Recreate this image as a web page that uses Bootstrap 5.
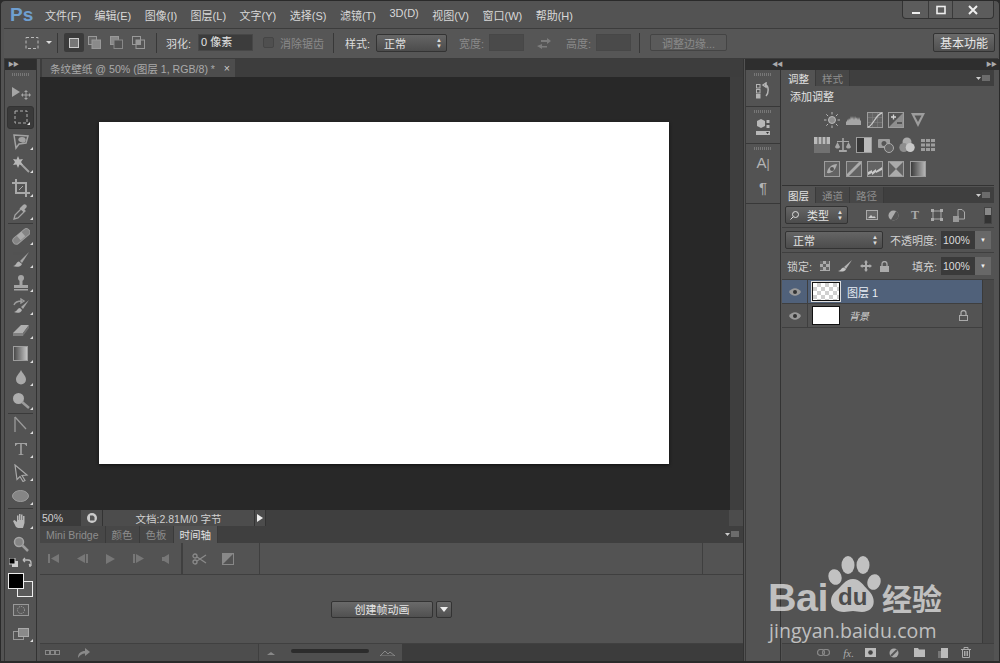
<!DOCTYPE html>
<html lang="zh">
<head>
<meta charset="UTF-8">
<title>Photoshop</title>
<link href="https://cdn.jsdelivr.net/npm/bootstrap@5.3.3/dist/css/bootstrap.min.css" rel="stylesheet">
<style>
  html, body { margin: 0; height: 663px; overflow: hidden; background: #2b2b2b; }
  body { font: 11px "Liberation Sans", "Noto Sans CJK SC", sans-serif; color: #d0d0d0; }
  svg { display: block; flex: none; }
  .win { width: 1000px; height: 663px; background: #535353; position: relative; overflow: hidden; border: 1px solid #2a2a2a; border-bottom-width: 2px; border-radius: 5px 5px 0 0; }

  .menubar { height: 27px; padding-left: 9px; }
  .logo { width: 35px; font: bold 19px "Liberation Sans", sans-serif; color: #6f9fd0; }
  .menu { gap: 13.5px; color: #d8d8d8; }
  .winbtns { align-self: flex-start; height: 18px; margin-right: 5px; border: 1px solid #333; border-top: 0; border-radius: 0 0 4px 4px; background: #5c5c5c; }
  .winbtns > div { height: 17px; display: flex; align-items: center; justify-content: center; border-left: 1px solid #3a3a3a; }
  .winbtns > div:first-child { border-left: 0; width: 25px; }
  .winbtns > div:nth-child(2) { width: 24px; }
  .winbtns > div:last-child { width: 41px; }

  /* 选项栏 */
  .optbar { height: 31px; margin: 0 1px 0 3px; padding: 0 0 2px 6px; border-top: 1px solid #3c3c3c; border-bottom: 1px solid #3c3c3c; background: #565656; color: #dcdcdc; }
  .optbar > * { flex: none; }
  .optbar .marquee { margin-left: 15px; }
  .optbar .caret { margin-left: 7px; }
  .optbar .sep1 { margin-left: 5px; }
  .optbar .mode-on { width: 20px; height: 19px; margin-left: 6px; background: #3b3b3b; border-radius: 2px; }
  .optbar .mode2 { margin-left: 4px; }
  .optbar .mode3 { margin-left: 9px; }
  .optbar .sep2 { margin-left: 11px; }
  .optbar .lbl-feather { margin-left: 9px; width: 32px; }
  .optbar .in-feather { width: 55px; }
  .optbar .chk { width: 11px; height: 11px; margin-left: 10px; background: #4f4f4f; border: 1px solid #454545; border-radius: 2px; }
  .optbar .lbl-aa { margin-left: 6px; width: 53px; }
  .optbar .lbl-style { margin-left: 11px; width: 31px; }
  .optbar .sel-style { width: 71px; }
  .optbar .lbl-w { margin-left: 12px; width: 30px; }
  .optbar .in-size { width: 35px; background: #4a4a4a; }
  .optbar .swap { margin-left: 13px; }
  .optbar .lbl-h { margin-left: 15px; width: 30px; }
  .optbar .sep3 { margin-left: 8px; }
  .optbar .refine { margin-left: 10px; width: 77px; height: 17px; background: #5a5a5a; border: 1px solid #444; border-radius: 2px; }
  .optbar .workspace { width: 62px; height: 19px; font-size: 12px; margin-right: 3px; }
  .vsep { width: 1px; height: 20px; background: #383838; }
  .dim { color: #8a8a8a; }
  .field { height: 17px; background: #3c3c3c; border: 1px solid #474747; color: #e4e4e4; padding-left: 2px; line-height: 15px; }
  .selbox { height: 18px; background: linear-gradient(#656565, #4c4c4c); border: 1px solid #333; border-radius: 2px; display: flex; align-items: center; justify-content: space-between; padding: 0 4px 0 7px; color: #e4e4e4; }
  .updown { font-size: 6px; line-height: 6px; color: #ddd; width: 6px; text-align: center; }
  .btn-ps { background: linear-gradient(#6a6a6a, #505050); border: 1px solid #333; border-radius: 2px; color: #e6e6e6; display: flex; align-items: center; justify-content: center; }

  .main { height: 602px; }
  .strip { height: 11px; background: #2e2e2e; color: #aaa; font-size: 6px; line-height: 11px; padding: 0 3px; letter-spacing: -1px; display: flex; justify-content: space-between; }
  .strip-r { margin-left: 1px; }
  .strip-r span:first-child { margin-left: 24px; }
  .grip { height: 3px; margin: 3px auto 0; width: 18px; background: repeating-linear-gradient(90deg, #777 0 1px, transparent 1px 2px); }

  /* 工具栏 */
  .toolbar { width: 33px; margin-left: 3px; margin-right: 3px; border-left: 1px solid #383838; border-right: 1px solid #333; }
  .tools { padding-top: 6px; }
  .tools svg { opacity: .85; }
  .tool { height: 23.55px; position: relative; display: flex; align-items: center; justify-content: center; }
  .tool.more::after { content: ""; position: absolute; right: 3px; bottom: 3px; border-style: solid; border-width: 0 0 3px 3px; border-color: transparent transparent #ddd transparent; }
  .tool.on { background: #3a3a3a; border-radius: 3px; margin: 0 2px; border: 1px solid #333; }
  .hsep { height: 1px; margin: 0 3px; background: #3a3a3a; }
  .swapper { height: 13px; }
  .swatches { padding: 4px 0 0 3px; }
  .fg { width: 16px; height: 16px; background: #000; border: 1px solid #eee; position: relative; z-index: 1; }
  .bg { width: 16px; height: 16px; background: #5a5a5a; border: 1px solid #eee; margin: -8px 0 0 9px; }
  .qmask { margin-top: 7px; }
  .screen { margin-top: 6px; }

  /* 文档区 */
  .center { width: 704px; border-right: 1px solid #333; }
  .doctabs { height: 18px; background: #3d3d3d; }
  .doctab { width: 193px; margin-left: 2px; height: 18px; background: #4d4d4d; color: #aaa; padding: 0 5px 0 8px; font-size: 10.6px; white-space: nowrap; }
  .doctab b { font-weight: normal; color: #ccc; }
  .canvas-wrap { height: 433px; }
  .canvas { background: #282828; flex: 1; padding: 45px 61px 46px 59px; }
  .paper { background: #fff; height: 100%; box-shadow: 0 1px 3px #111; }
  .vscroll { width: 13px; background: #3e3e3e; }
  .status { height: 16px; background: #3f3f3f; font-size: 10.5px; }
  .seg { height: 16px; background: #4c4c4c; border-right: 1px solid #333; display: flex; align-items: center; justify-content: center; }
  .seg-zoom { width: 41px; justify-content: flex-start; padding-left: 2px; background: #3a3a3a; border: 0; }
  .seg-prof { width: 22px; }
  .seg-doc { width: 152px; }
  .seg-arrow { width: 11px; }
  .seg-corner { width: 14px; border: 0; }
  .ptabs { height: 17px; background: #3f3f3f; }
  .ptabs-sm { height: 16px; }
  .ptab { padding: 0 6px; display: flex; align-items: center; font-size: 10.5px; color: #8e8e8e; background: #474747; border-right: 1px solid #3a3a3a; }
  .ptab.on { background: #535353; color: #e2e2e2; }
  .tlctrl { height: 32px; border-bottom: 1px solid #3f3f3f; }
  .cell { height: 100%; border-right: 1px solid #3f3f3f; }
  .cell-play { width: 143px; gap: 18px; padding-left: 8px; border-right-width: 2px; }
  .cell-cut { width: 77px; gap: 15px; padding-left: 9px; }
  .cell-rest { width: 443px; }
  .tlbody { flex: 1; gap: 3px; }
  .btn-create { width: 102px; height: 17px; }
  .btn-drop { width: 16px; height: 17px; }
  .tlfoot { height: 18px; border-top: 1px solid #404040; background: #4d4d4d; }
  .foot-left { width: 219px; height: 100%; border-right: 1px solid #3f3f3f; padding-left: 5px; gap: 1px; }
  .foot-zoom { width: 143px; height: 100%; background: #4f4f4f; padding-left: 8px; }
  .foot-rest { background: #3c3c3c; }
  .slider { width: 78px; height: 4px; margin: 0 11px 4px 16px; background: #2c2c2c; border-radius: 2px; }

  /* 右侧面板 */
  .iconcol { width: 36px; margin-left: 1px; border-right: 1px solid #333; border-left: 1px solid #3a3a3a; }
  .icongroup { display: flow-root; height: 37px; border-bottom: 1px solid #383838; }
  .icongroup.tall { height: 60px; }
  .ig1 { margin-top: 6px; }
  .ig2 { margin-top: 5px; }
  .glyph { font-size: 15px; line-height: 18px; color: #b4b4b4; }
  .glyph-a { margin-top: 4px; }
  .glyph-p { margin-top: 6px; }
  .glyph small { font-size: 12px; }
  .panels { flex: 1; margin: 0 5px 0 1px; }
  .adj { height: 116px; border-bottom: 1px solid #333; }
  .adj-title { padding: 4px 8px; line-height: 14px; color: #e2e2e2; }
  .iconrow { gap: 5.4px; justify-content: center; height: 24.5px; align-items: center; padding-right: 26px; }
  .iconrow svg { opacity: .85; }
  .lyrtools { height: 25px; padding: 2px 3px; border-bottom: 1px solid #3f3f3f; }
  .lyrtools.lockrow { height: 27px; padding-left: 5px; }
  .sel-kind { width: 63px; padding-left: 4px; }
  .sel-blend { width: 98px; }
  .kinds { gap: 10px; margin-left: 18px; color: #aaa; }
  .kind-t { font: bold 12px/12px "Liberation Serif", serif; width: 12px; text-align: center; }
  .kind-switch { width: 8px; height: 17px; margin-right: -1px; background: linear-gradient(#888 0 45%, #333 45%); border: 1px solid #444; }
  .lbl-opacity { margin-left: 7px; white-space: nowrap; flex: 1; }
  .pct { width: 50px; height: 18px; display: flex; }
  .pct span { flex: 1; background: #3a3a3a; color: #ddd; padding-left: 2px; line-height: 18px; font-size: 10.5px; }
  .pct i { width: 16px; background: #686868; color: #eee; font-style: normal; text-align: center; font-size: 6px; line-height: 18px; }
  .lbl-lock { width: 28px; }
  .lock-1 { margin-left: 5px; }
  .lock-2 { margin-left: 8px; }
  .lock-3 { margin-left: 7px; }
  .lock-4 { margin-left: 8px; }
  .layers { flex: 1; margin-top: 1px; background: #535353; }
  .layers-list { flex: 1; border-right: 1px solid #3a3a3a; }
  .lscroll { width: 11px; background: #484848; }
  .lrow { height: 24px; border-bottom: 1px solid #3f3f3f; }
  .lrow.sel { background: #50617a; color: #e8edf5; }
  .eye { width: 26px; height: 100%; border-right: 1px solid #3f3f3f; display: flex; align-items: center; justify-content: center; }
  .thumb { width: 28px; height: 19px; margin: 0 7px 0 4px; background: #fff; border: 1px solid #111; }
  .checker { background: repeating-conic-gradient(#cfcfcf 0 25%, #fff 0 50%) 0 0 / 8px 8px; outline: 1px solid #ddd; }
  .lname-bg { margin-left: 2px; font-size: 10px; }
  .lrow-lock { margin-right: 14px; }
  .lfoot { height: 18px; background: #4d4d4d; border-top: 1px solid #3f3f3f; gap: 13px; padding-right: 23px; justify-content: flex-end; }
  .lfoot .fx { font: italic 11px "Liberation Serif", serif; color: #aaa; margin-right: -2px; }

  /* 水印 */
  .watermark { position: absolute; left: 767px; top: 553px; width: 185px; color: rgba(235,235,235,.72); pointer-events: none; z-index: 5; }
  .wm-paw { position: absolute; left: 50px; top: 0; }
  .wm-row { position: absolute; left: 0; top: 28px; width: 185px; display: flex; }
  .wm-bai { width: 114px; font: bold 39.5px/30px "Liberation Sans", sans-serif; letter-spacing: -.5px; }
  .wm-cn { font: bold 30px/30px "Noto Sans CJK SC", sans-serif; }
  .wm-du { position: absolute; left: 70px; top: 31px; font: bold 24px/24px "Liberation Sans", sans-serif; color: #4c4c4c; }
  .wm-url { position: absolute; left: 1px; top: 65px; font: 19.5px/24px "Open Sans", sans-serif; letter-spacing: .1px; white-space: nowrap; }
</style>
</head>
<body>
<div class="win d-flex flex-column">

  <!-- 菜单栏 -->
  <div class="menubar d-flex align-items-center">
    <div class="logo">Ps</div>
    <div class="menu d-flex">
      <span>文件(F)</span><span>编辑(E)</span><span>图像(I)</span><span>图层(L)</span><span>文字(Y)</span><span>选择(S)</span><span>滤镜(T)</span><span>3D(D)</span><span>视图(V)</span><span>窗口(W)</span><span>帮助(H)</span>
    </div>
    <div class="winbtns d-flex ms-auto">
      <div><svg width="10" height="10" viewBox="0 0 10 10"><rect x="1" y="7" width="8" height="2" fill="#eee"/></svg></div>
      <div><svg width="10" height="10" viewBox="0 0 10 10"><rect x="1" y="1.500" width="8" height="7" fill="none" stroke="#eee" stroke-width="1.600"/></svg></div>
      <div><svg width="10" height="10" viewBox="0 0 10 10"><path d="M1 1l8 8M9 1l-8 8" stroke="#eee" stroke-width="2"/></svg></div>
    </div>
  </div>

  <!-- 选项栏 -->
  <div class="optbar d-flex align-items-center">
    <svg class="marquee" width="14" height="14" viewBox="0 0 14 14"><rect x="1" y="1.500" width="12" height="11" fill="none" stroke="#bbb" stroke-dasharray="3 2"/></svg>
    <svg class="caret" width="6" height="4" viewBox="0 0 6 4"><path d="M0 0h6L3 3z" fill="#ddd"/></svg>
    <div class="vsep sep1"></div>
    <div class="mode-on d-flex align-items-center justify-content-center"><svg width="10" height="10" viewBox="0 0 10 10"><rect x=".5" y=".5" width="9" height="9" fill="#777" stroke="#ccc"/></svg></div>
    <svg class="mode2" width="13" height="13" viewBox="0 0 13 13"><rect x=".5" y=".5" width="8" height="8" fill="#666" stroke="#999"/><rect x="4" y="4" width="8.500" height="8.500" fill="#8a8a8a" stroke="#999"/></svg>
    <svg class="mode3" width="13" height="13" viewBox="0 0 13 13"><rect x=".5" y=".5" width="8" height="8" fill="#888" stroke="#999"/><rect x="4" y="4" width="8.500" height="8.500" fill="#535353" stroke="#888"/></svg>
    <svg class="mode3" width="13" height="13" viewBox="0 0 13 13"><rect x=".5" y=".5" width="8" height="8" fill="none" stroke="#999"/><rect x="4" y="4" width="8.500" height="8.500" fill="none" stroke="#999"/><rect x="4" y="4" width="4.500" height="4.500" fill="#999"/></svg>
    <div class="vsep sep2"></div>
    <span class="lbl-feather">羽化:</span>
    <div class="field in-feather">0 像素</div>
    <div class="chk"></div>
    <span class="dim lbl-aa">消除锯齿</span>
    <div class="vsep"></div>
    <span class="lbl-style">样式:</span>
    <div class="selbox sel-style"><span>正常</span><span class="updown">▲<br>▼</span></div>
    <span class="dim lbl-w">宽度:</span>
    <div class="field in-size"></div>
    <svg class="swap" width="14" height="12" viewBox="0 0 14 12"><path d="M4 3h6V1l4 3-4 3V5H4zM10 9H5V7L0 9l5 3v-1.500h5z" fill="#7c7c7c"/></svg>
    <span class="dim lbl-h">高度:</span>
    <div class="field in-size"></div>
    <div class="vsep sep3"></div>
    <div class="refine d-flex align-items-center justify-content-center dim">调整边缘...</div>
    <div class="btn-ps workspace ms-auto">基本功能</div>
  </div>

  <div class="main d-flex">
    <!-- 工具栏 -->
    <div class="toolbar d-flex flex-column">
      <div class="strip"><span>▶▶</span></div>
      <div class="grip"></div>
      <div class="tools">
        <div class="tool"><svg width="20" height="16" viewBox="0 0 20 16" fill="#b4b4b4"><path d="M1 1l8 5-8 5z"/><path d="M13 6l2-2 2 2h-1.500v2.500H18V7l2 2-2 2v-1.500h-2.500V12H17l-2 2-2-2h1.500V9.500H12V11l-2-2 2-2v1.500h2.500V6z"/></svg></div>
        <div class="tool on more"><svg width="14" height="14" viewBox="0 0 14 14"><rect x="1" y="1" width="12" height="12" fill="none" stroke="#c4c4c4" stroke-dasharray="3 2"/></svg></div>
        <div class="tool more"><svg width="18" height="18" viewBox="0 0 18 18" fill="none" stroke="#b0b0b0" stroke-width="1.500"><path d="M2 3l14 1-2 7-7 1-3 4z"/><path d="M7 8c0-3 6-3 6 0s-5 2-6 0z" fill="#b0b0b0"/></svg></div>
        <div class="tool more"><svg width="18" height="18" viewBox="0 0 18 18"><path d="M7 7l10 10" stroke="#b0b0b0" stroke-width="2"/><path d="M6 1l1.500 3.500L11 4l-2 3 2 3-3.500-.5L6 13 4.500 9.500 1 10l2-3-2-3 3.500.5z" fill="#c8c8c8"/></svg></div>
        <div class="tool more"><svg width="18" height="18" viewBox="0 0 18 18" fill="none" stroke="#b8b8b8" stroke-width="2"><path d="M4 0v14h14M0 4h14v14"/><path d="M7 11l4-4" stroke-width="1"/></svg></div>
        <div class="tool more"><svg width="18" height="18" viewBox="0 0 18 18"><path d="M2 16l1-4 7-7 3 3-7 7z" fill="none" stroke="#b0b0b0" stroke-width="1.300"/><path d="M9 4l2-2c1-1 2-1 3-.2s1 2 .2 3l-2 2 1 1-1.500 1.500L7.500 5.500 9 4z" fill="#b8b8b8"/></svg></div>
        <div class="hsep"></div>
        <div class="tool more"><svg width="18" height="18" viewBox="0 0 18 18"><rect x="-1" y="6" width="20" height="7" rx="3.500" transform="rotate(-40 9 9)" fill="#8e8e8e" stroke="#aaa"/><rect x="6" y="6" width="6" height="6" fill="#bbb" transform="rotate(-40 9 9)"/></svg></div>
        <div class="tool more"><svg width="18" height="18" viewBox="0 0 18 18"><path d="M17 1L8 10l2 2z" fill="#b4b4b4"/><path d="M7 10.500c-3 0-2 4-6 4.500 3 1.500 8 1 9-2z" fill="#c4c4c4"/></svg></div>
        <div class="tool more"><svg width="18" height="18" viewBox="0 0 18 18" fill="#b4b4b4"><circle cx="9" cy="4" r="3"/><rect x="7.500" y="5" width="3" height="6"/><path d="M2 11h14v3H2z"/><rect x="2" y="15" width="14" height="1.500"/></svg></div>
        <div class="tool more"><svg width="18" height="18" viewBox="0 0 18 18"><path d="M17 2l-8 7 2 2z" fill="#b4b4b4"/><path d="M8 10c-3 0-2 3-6 4 3 1.500 7 1 8-2z" fill="#c4c4c4"/><path d="M2 7c1-3 4-4 8-4M9 1l3 2-3 2z" fill="none" stroke="#aaa" stroke-width="1.400"/></svg></div>
        <div class="tool more"><svg width="18" height="18" viewBox="0 0 18 18"><path d="M1 12l8-8h8l-6 8z" fill="#c0c0c0"/><path d="M1 12h10v3H1z" fill="#8a8a8a"/><path d="M11 12l6-8v3l-6 8z" fill="#777"/></svg></div>
        <div class="tool more"><svg width="15" height="15" viewBox="0 0 15 15"><defs><linearGradient id="grad"><stop offset="0" stop-color="#444"/><stop offset="1" stop-color="#ddd"/></linearGradient></defs><rect x=".5" y=".5" width="14" height="14" fill="url(#grad)" stroke="#aaa"/></svg></div>
        <div class="tool more"><svg width="14" height="16" viewBox="0 0 14 16"><path d="M7 1c2 4 5 6 5 9.500a5 5 0 0 1-10 0C2 7 5 5 7 1z" fill="#b8b8b8"/></svg></div>
        <div class="tool more"><svg width="18" height="18" viewBox="0 0 18 18"><circle cx="6.500" cy="6.500" r="5.500" fill="#bdbdbd"/><path d="M10 10l7 6" stroke="#a8a8a8" stroke-width="2.500"/></svg></div>
        <div class="hsep"></div>
        <div class="tool more"><svg width="16" height="18" viewBox="0 0 16 18" fill="none" stroke="#a8a8a8" stroke-width="1.300"><path d="M2 1v15"/><path d="M2 1l11 12"/></svg></div>
        <div class="tool more"><svg width="14" height="14" viewBox="0 0 14 14"><path d="M1 1h12v3h-.8C12 3 11 2 10 2H7.800v10l1.700.4v.6H4.500v-.6l1.700-.4V2H4C3 2 2 3 1.800 4H1z" fill="#b0b0b0"/></svg></div>
        <div class="tool more"><svg width="16" height="18" viewBox="0 0 16 18"><path d="M2 1l12 10-5 .5 3 5-2 1-3-5-3 3z" fill="#4a4a4a" stroke="#b8b8b8" stroke-width="1.200"/></svg></div>
        <div class="tool more"><svg width="17" height="12" viewBox="0 0 17 12"><ellipse cx="8.500" cy="6" rx="8" ry="5.500" fill="#8e8e8e" stroke="#aaa"/></svg></div>
        <div class="hsep"></div>
        <div class="tool more"><svg width="18" height="18" viewBox="0 0 18 18"><path d="M4 15L1 9l1.500-1L5 10V3.500h1.500V8h.5V2h1.500v6h.5V2.500h1.500V8h.5V4h1.500v7l-1.500 5H6z" fill="#c8c8c8"/></svg></div>
        <div class="tool"><svg width="16" height="16" viewBox="0 0 16 16"><circle cx="6" cy="6" r="4.500" fill="#8d8d8d" stroke="#b4b4b4" stroke-width="1.500"/><path d="M9.500 9.500l5.500 5.500" stroke="#aaa" stroke-width="2.500"/></svg></div>
      </div>
      <div class="swapper d-flex justify-content-between align-items-center px-1">
        <svg width="9" height="9" viewBox="0 0 9 9"><rect x="3" y="3" width="6" height="6" fill="#ccc"/><rect width="6" height="6" fill="#000" stroke="#ccc"/></svg>
        <svg width="10" height="10" viewBox="0 0 10 10" fill="none" stroke="#bbb" stroke-width="1.300"><path d="M1 3h5c2 0 3 1 3 3v3M1 3l2-2M1 3l2 2M9 9L7 7M9 9l-2 0"/></svg>
      </div>
      <div class="swatches">
        <div class="fg"></div><div class="bg"></div>
      </div>
      <div class="qmask d-flex justify-content-center"><svg width="16" height="12" viewBox="0 0 16 12"><rect x=".5" y=".5" width="15" height="11" fill="#5a5a5a" stroke="#999"/><circle cx="8" cy="6" r="3.500" fill="none" stroke="#aaa" stroke-dasharray="1 1"/></svg></div>
      <div class="tool more screen"><svg width="16" height="12" viewBox="0 0 16 12"><rect x=".5" y="3.500" width="10" height="8" fill="#555" stroke="#999"/><rect x="5.500" y=".5" width="10" height="8" fill="#8a8a8a" stroke="#aaa"/></svg></div>
    </div>

    <!-- 文档区 -->
    <div class="center d-flex flex-column">
      <div class="doctabs d-flex">
        <div class="doctab d-flex align-items-center justify-content-between"><span>条纹壁纸 @ 50% (图层 1, RGB/8) *</span><b>×</b></div>
      </div>
      <div class="canvas-wrap d-flex">
        <div class="canvas"><div class="paper"></div></div>
        <div class="vscroll"></div>
      </div>
      <div class="status d-flex">
        <div class="seg seg-zoom">50%</div>
        <div class="seg seg-prof"><svg width="10" height="10" viewBox="0 0 10 10"><circle cx="5" cy="5" r="5" fill="#ccc"/><path d="M3 2.500h3l1.500 1.500v3.500H3z" fill="#555"/></svg></div>
        <div class="seg seg-doc">文档:2.81M/0 字节</div>
        <div class="seg seg-arrow"><svg width="6" height="8" viewBox="0 0 6 8"><path d="M0 0l6 4-6 4z" fill="#eee"/></svg></div>
        <div class="seg seg-corner ms-auto"></div>
      </div>
      <div class="ptabs d-flex">
        <div class="ptab">Mini Bridge</div><div class="ptab">颜色</div><div class="ptab">色板</div><div class="ptab on">时间轴</div>
        <svg class="ms-auto me-1 align-self-center" width="14" height="7" viewBox="0 0 14 7"><path d="M0 2h5L2.500 5z" fill="#ccc"/><path d="M6 1h8M6 3h8M6 5h8" stroke="#999"/></svg>
      </div>
      <div class="tlctrl d-flex">
        <div class="cell cell-play d-flex align-items-center">
          <svg width="11" height="9" viewBox="0 0 11 9" fill="#777"><rect width="2" height="9"/><path d="M3 4.500L11 0v9z"/></svg>
          <svg width="11" height="9" viewBox="0 0 11 9" fill="#777"><path d="M0 4.500L8 0v9z"/><rect x="9" width="2" height="9"/></svg>
          <svg width="9" height="10" viewBox="0 0 9 10" fill="#777"><path d="M0 0l9 5-9 5z"/></svg>
          <svg width="11" height="9" viewBox="0 0 11 9" fill="#777"><rect width="2" height="9"/><path d="M3 0l8 4.500L3 9z"/></svg>
          <svg width="7" height="10" viewBox="0 0 7 10" fill="#777"><path d="M0 3h2l5-3v10L2 7H0z"/></svg>
        </div>
        <div class="cell cell-cut d-flex align-items-center">
          <svg width="15" height="12" viewBox="0 0 15 12" fill="none" stroke="#8a8a8a" stroke-width="1.300"><circle cx="3" cy="3" r="2"/><circle cx="3" cy="9" r="2"/><path d="M5 4l9 6M5 8l9-6"/></svg>
          <svg width="12" height="12" viewBox="0 0 12 12"><rect width="12" height="12" fill="#888"/><path d="M11 1v10H1z" fill="#535353"/></svg>
        </div>
        <div class="cell cell-rest"></div>
      </div>
      <div class="tlbody d-flex align-items-center justify-content-center">
        <div class="btn-ps btn-create">创建帧动画</div>
        <div class="btn-ps btn-drop"><svg width="8" height="5" viewBox="0 0 8 5"><path d="M0 0h8L4 5z" fill="#eee"/></svg></div>
      </div>
      <div class="tlfoot d-flex align-items-center">
        <div class="foot-left d-flex align-items-center">
          <svg width="16" height="5" viewBox="0 0 16 5" fill="none" stroke="#888"><rect x=".5" y=".5" width="4" height="4"/><rect x="5.500" y=".5" width="4" height="4"/><rect x="10.500" y=".5" width="4" height="4"/></svg>
          <svg class="ms-3" width="12" height="10" viewBox="0 0 12 10"><path d="M0 10c0-5 3-7 7-7V0l5 4-5 4V5.500C4 5.500 2 7 0 10z" fill="#8a8a8a"/></svg>
        </div>
        <div class="foot-zoom d-flex align-items-center">
          <svg width="8" height="4" viewBox="0 0 8 4"><path d="M0 4l4-3 4 3z" fill="#888"/></svg>
          <div class="slider"></div>
          <svg width="15" height="6" viewBox="0 0 15 6"><path d="M0 6l5-5 3 3 2-2 5 4z" fill="none" stroke="#888"/></svg>
        </div>
        <div class="foot-rest flex-grow-1 h-100"></div>
      </div>
    </div>

    <!-- 右侧面板 -->
    <div class="d-flex flex-column flex-grow-1">
      <div class="strip strip-r"><span>◀◀</span><span>▶▶</span></div>
      <div class="d-flex flex-grow-1">
        <div class="iconcol">
          <div class="icongroup"><div class="grip"></div>
            <div class="ig1 d-flex justify-content-center"><svg width="15" height="17" viewBox="0 0 15 17" fill="none" stroke="#b4b4b4"><rect x=".5" y="2.500" width="3.500" height="3.500"/><rect x=".5" y="7.500" width="3.500" height="3.500"/><rect x=".5" y="12.500" width="3.500" height="3.500" fill="#b4b4b4"/><path d="M7 3l3-2v4zM9 3c4 0 4 8 1 11" stroke-width="1.500"/></svg></div>
          </div>
          <div class="icongroup"><div class="grip"></div>
            <div class="ig2 d-flex justify-content-center"><svg width="15" height="18" viewBox="0 0 15 18" fill="#b8b8b8"><path d="M1 3l4-2 4 2v5l-4 2-4-2z"/><rect x="10.500" y="2" width="3" height="3"/><rect x="10.500" y="7" width="3" height="3"/><rect y="13" width="14" height="4"/><path d="M10 14h3l-1.500 2z" fill="#333"/></svg></div>
          </div>
          <div class="icongroup tall"><div class="grip"></div>
            <div class="glyph glyph-a text-center">A<small>|</small></div>
            <div class="glyph glyph-p text-center">¶</div>
          </div>
        </div>

        <div class="panels d-flex flex-column">
          <div class="adj">
            <div class="ptabs ptabs-sm d-flex">
              <div class="ptab on">调整</div><div class="ptab">样式</div>
              <svg class="ms-auto me-1 align-self-center" width="14" height="7" viewBox="0 0 14 7"><path d="M0 2h5L2.500 5z" fill="#ccc"/><path d="M6 1h8M6 3h8M6 5h8" stroke="#999"/></svg>
            </div>
            <div class="adj-title">添加调整</div>
            <div class="iconrow d-flex">
              <svg width="16" height="16" viewBox="0 0 16 16" stroke="#ccc"><circle cx="8" cy="8" r="3.500" fill="#9a9a9a"/><path d="M8 0v2.500M8 13.500V16M0 8h2.500M13.500 8H16M2.300 2.300l1.800 1.800M11.900 11.900l1.800 1.800M2.300 13.700l1.800-1.800M11.900 4.100l1.800-1.800"/></svg>
              <svg width="16" height="16" viewBox="0 0 16 16"><path d="M0 13V9l1 1V7l1 2 1-3 1 2 1-4 1 3 1-3 1 4 1-4 1 3 1-2 1 3 1-3 1 3 1 1v4z" fill="#b4b4b4"/></svg>
              <svg width="16" height="16" viewBox="0 0 16 16"><rect x=".5" y=".5" width="15" height="15" fill="#666" stroke="#aaa"/><path d="M1 5.500h14M1 10.500h14M5.500 1v14M10.500 1v14" stroke="#888" stroke-width=".6"/><path d="M1 15C6 14 9 2 15 1" stroke="#ddd" stroke-width="1.300" fill="none"/></svg>
              <svg width="16" height="16" viewBox="0 0 16 16"><rect x=".5" y=".5" width="15" height="15" fill="#555" stroke="#aaa"/><path d="M1 15L15 1v14z" fill="#999"/><path d="M3 5h5M5.500 2.500v5" stroke="#eee" stroke-width="1.300"/><path d="M9 11h5" stroke="#333" stroke-width="1.300"/></svg>
              <svg width="16" height="16" viewBox="0 0 16 16"><path d="M1 1h14L8 15z" fill="#aaa"/><path d="M4.500 3.500h7L8 10z" fill="#555"/></svg>
            </div>
            <div class="iconrow d-flex">
              <svg width="16" height="16" viewBox="0 0 16 16"><rect width="16" height="7" fill="#ccc"/><rect y="7" width="16" height="9" fill="#777"/><path d="M4 0v7M8 0v7M12 0v7" stroke="#555"/></svg>
              <svg width="16" height="16" viewBox="0 0 16 16" fill="#b4b4b4"><path d="M7.200 1h1.600v12h3v2H4v-2h3.200z"/><path d="M2 4h12v1H2zM0 10l2.500-5L5 10c-1 2-4 2-5 0zM11 10l2.500-5 2.500 5c-1 2-4 2-5 0z"/></svg>
              <svg width="16" height="16" viewBox="0 0 16 16"><rect x=".5" y=".5" width="15" height="15" fill="#ccc" stroke="#aaa"/><rect x="1" y="1" width="7" height="14" fill="#333"/></svg>
              <svg width="16" height="16" viewBox="0 0 16 16"><rect x="0" y="2" width="12" height="9" rx="1" fill="#aaa"/><circle cx="6" cy="6.500" r="2.500" fill="#555"/><circle cx="11" cy="11" r="4.500" fill="#666" stroke="#bbb"/></svg>
              <svg width="16" height="16" viewBox="0 0 16 16" fill="#bbb"><circle cx="8" cy="5" r="4.500"/><circle cx="4.800" cy="10.500" r="4.500" fill="#999"/><circle cx="11.200" cy="10.500" r="4.500" fill="#ddd"/></svg>
              <svg width="16" height="16" viewBox="0 0 16 16" fill="#aaa"><rect y="1" width="16" height="14" fill="#555"/><path d="M1 2h4v3H1zM6 2h4v3H6zM11 2h4v3h-4zM1 6.500h4v3H1zM6 6.500h4v3H6zM11 6.500h4v3h-4zM1 11h4v3H1zM6 11h4v3H6zM11 11h4v3h-4z"/></svg>
            </div>
            <div class="iconrow d-flex">
              <svg width="16" height="16" viewBox="0 0 16 16"><rect x=".5" y=".5" width="15" height="15" fill="#666" stroke="#aaa"/><path d="M3 12c0-5 5-9 10-9-1 5-5 10-10 9z" fill="#bbb"/><circle cx="8" cy="8" r="2" fill="#555"/></svg>
              <svg width="16" height="16" viewBox="0 0 16 16"><rect x=".5" y=".5" width="15" height="15" fill="#666" stroke="#aaa"/><path d="M1 13L13 1h2v2L3 15H1z" fill="#bbb"/></svg>
              <svg width="16" height="16" viewBox="0 0 16 16"><rect x=".5" y=".5" width="15" height="15" fill="#666" stroke="#aaa"/><path d="M1 11l4-2v2l4-3v2l6-4v3l-6 3v-1l-4 3v-2l-4 2z" fill="#ddd"/></svg>
              <svg width="16" height="16" viewBox="0 0 16 16"><rect x=".5" y=".5" width="15" height="15" fill="#bbb" stroke="#aaa"/><path d="M1 1l7 7-7 7zM15 1L8 8l7 7z" fill="#666"/></svg>
              <svg width="16" height="16" viewBox="0 0 16 16"><defs><linearGradient id="grad2"><stop offset="0" stop-color="#333"/><stop offset="1" stop-color="#ccc"/></linearGradient></defs><rect x=".5" y=".5" width="15" height="15" fill="url(#grad2)" stroke="#aaa"/></svg>
            </div>
          </div>

          <div class="layers d-flex flex-column">
            <div class="ptabs ptabs-sm d-flex">
              <div class="ptab on">图层</div><div class="ptab">通道</div><div class="ptab">路径</div>
              <svg class="ms-auto me-1 align-self-center" width="14" height="7" viewBox="0 0 14 7"><path d="M0 2h5L2.500 5z" fill="#ccc"/><path d="M6 1h8M6 3h8M6 5h8" stroke="#999"/></svg>
            </div>
            <div class="lyrtools d-flex align-items-center">
              <div class="selbox sel-kind"><svg width="9" height="9" viewBox="0 0 9 9" fill="none" stroke="#ddd"><circle cx="5.500" cy="3.500" r="3"/><path d="M3 6L.5 8.500"/></svg><span>类型</span><span class="updown">▲<br>▼</span></div>
              <div class="kinds d-flex align-items-center">
                <svg width="12" height="10" viewBox="0 0 12 10"><rect x=".5" y=".5" width="11" height="9" fill="#666" stroke="#aaa"/><path d="M2 8l3-3 2 2 1-1 2 2z" fill="#ccc"/></svg>
                <svg width="11" height="11" viewBox="0 0 11 11"><circle cx="5.500" cy="5.500" r="5" fill="#aaa"/><path d="M5.500.5a5 5 0 0 1 0 10z" fill="#555" transform="rotate(30 5.500 5.500)"/></svg>
                <span class="kind-t">T</span>
                <svg width="12" height="12" viewBox="0 0 12 12" fill="#aaa"><path d="M2 2h8v8H2z" fill="none" stroke="#aaa"/><rect width="3" height="3"/><rect x="9" width="3" height="3"/><rect y="9" width="3" height="3"/><rect x="9" y="9" width="3" height="3"/></svg>
                <svg width="12" height="13" viewBox="0 0 12 13"><path d="M5 .5h4l2.500 2.500v7H5z" fill="none" stroke="#aaa"/><rect y="7" width="6" height="6" fill="#999"/></svg>
              </div>
              <div class="kind-switch ms-auto"></div>
            </div>
            <div class="lyrtools d-flex align-items-center">
              <div class="selbox sel-blend"><span>正常</span><span class="updown">▲<br>▼</span></div>
              <span class="lbl-opacity">不透明度:</span>
              <div class="pct"><span>100%</span><i>▼</i></div>
            </div>
            <div class="lyrtools lockrow d-flex align-items-center">
              <span class="lbl-lock">锁定:</span>
              <svg class="lock-1" width="10" height="10" viewBox="0 0 10 10"><rect width="10" height="10" fill="#aaa"/><path d="M0 0h3v3H0zM6 0h3v3H6zM3 3h3v3H3zM0 6h3v3H0zM6 6h3v3H6z" fill="#666"/></svg>
              <svg class="lock-2" width="15" height="12" viewBox="0 0 15 12"><path d="M14 0L6 7l2 2z" fill="#b4b4b4"/><path d="M5.500 7.500C3 8 3 11 0 11c3 1 7 1 8-2z" fill="#c4c4c4"/></svg>
              <svg class="lock-3" width="12" height="12" viewBox="0 0 12 12" fill="#aaa"><path d="M6 0l2 2.500H7V5h2.500V4L12 6 9.500 8V7H7v2.500h1L6 12 4 9.500h1V7H2.500v1L0 6l2.500-2v1H5V2.500H4z"/></svg>
              <svg class="lock-4" width="9" height="11" viewBox="0 0 9 11"><path d="M2 5V3a2.500 2.500 0 0 1 5 0v2" fill="none" stroke="#aaa" stroke-width="1.300"/><rect y="5" width="9" height="6" fill="#aaa"/></svg>
              <span class="ms-auto me-1">填充:</span>
              <div class="pct"><span>100%</span><i>▼</i></div>
            </div>
            <div class="d-flex flex-grow-1">
              <div class="layers-list">
                <div class="lrow sel d-flex align-items-center"><div class="eye"><svg width="12" height="8" viewBox="0 0 12 8"><path d="M0 4c3-5 9-5 12 0-3 5-9 5-12 0z" fill="#999"/><circle cx="6" cy="4" r="2" fill="#333"/></svg></div><div class="thumb checker"></div><span>图层 1</span></div>
                <div class="lrow d-flex align-items-center"><div class="eye"><svg width="12" height="8" viewBox="0 0 12 8"><path d="M0 4c3-5 9-5 12 0-3 5-9 5-12 0z" fill="#999"/><circle cx="6" cy="4" r="2" fill="#333"/></svg></div><div class="thumb"></div><span class="lname-bg fst-italic">背景</span><svg class="lrow-lock ms-auto" width="9" height="11" viewBox="0 0 9 11"><path d="M2 5V3a2.500 2.500 0 0 1 5 0v2" fill="none" stroke="#aaa" stroke-width="1.300"/><rect x=".5" y="5.500" width="8" height="5" fill="none" stroke="#aaa"/></svg></div>
              </div>
              <div class="lscroll"></div>
            </div>
            <div class="lfoot d-flex align-items-center">
              <svg width="13" height="7" viewBox="0 0 13 7" fill="none" stroke="#888" stroke-width="1.200"><rect x=".5" y=".5" width="7" height="6" rx="3"/><rect x="5.500" y=".5" width="7" height="6" rx="3"/></svg>
              <span class="fx">fx.</span>
              <svg width="11" height="9" viewBox="0 0 11 9"><rect width="11" height="9" fill="#bbb"/><circle cx="5.500" cy="4.500" r="2.300" fill="#444"/></svg>
              <svg width="12" height="10" viewBox="0 0 12 10"><circle cx="5" cy="5" r="4.500" fill="#aaa"/><path d="M8 2L2 8" stroke="#555" stroke-width="2"/></svg>
              <svg width="11" height="9" viewBox="0 0 11 9"><path d="M0 0h4l1 1.500h6V9H0z" fill="#bbb"/></svg>
              <svg width="10" height="10" viewBox="0 0 10 10"><path d="M3 0h7v10H3z" fill="#bbb"/><path d="M0 3h3v7H0z" fill="#777"/></svg>
              <svg width="10" height="11" viewBox="0 0 10 11" fill="none" stroke="#aaa"><path d="M0 2.500h10M3 2.500V.5h4v2M1.500 2.500v8h7v-8M3.500 4v5M5 4v5M6.500 4v5"/></svg>
            </div>
          </div>
        </div>
      </div>
    </div>
  </div>

  <!-- 水印 -->
  <div class="watermark">
    <svg class="wm-paw" width="64" height="60" viewBox="0 0 64 60" fill="currentColor">
      <ellipse cx="17" cy="23" rx="6.500" ry="8" transform="rotate(-20 17 23)"/>
      <ellipse cx="30" cy="11" rx="6.500" ry="9"/>
      <ellipse cx="45" cy="11" rx="6.500" ry="9"/>
      <ellipse cx="56" cy="28" rx="6.500" ry="8" transform="rotate(20 56 28)"/>
      <path d="M35 25c7 0 10 6 15 11 8 7 9 21-6 22-4 0-6-1-9-1s-6 1-9 1C11 58 10 43 18 37c6-5 9-12 17-12z"/>
    </svg>
    <div class="wm-row">
      <span class="wm-bai">Bai</span><span class="wm-cn">经验</span>
    </div>
    <span class="wm-du">du</span>
    <div class="wm-url">jingyan.baidu.com</div>
  </div>
</div>
</body>
</html>
